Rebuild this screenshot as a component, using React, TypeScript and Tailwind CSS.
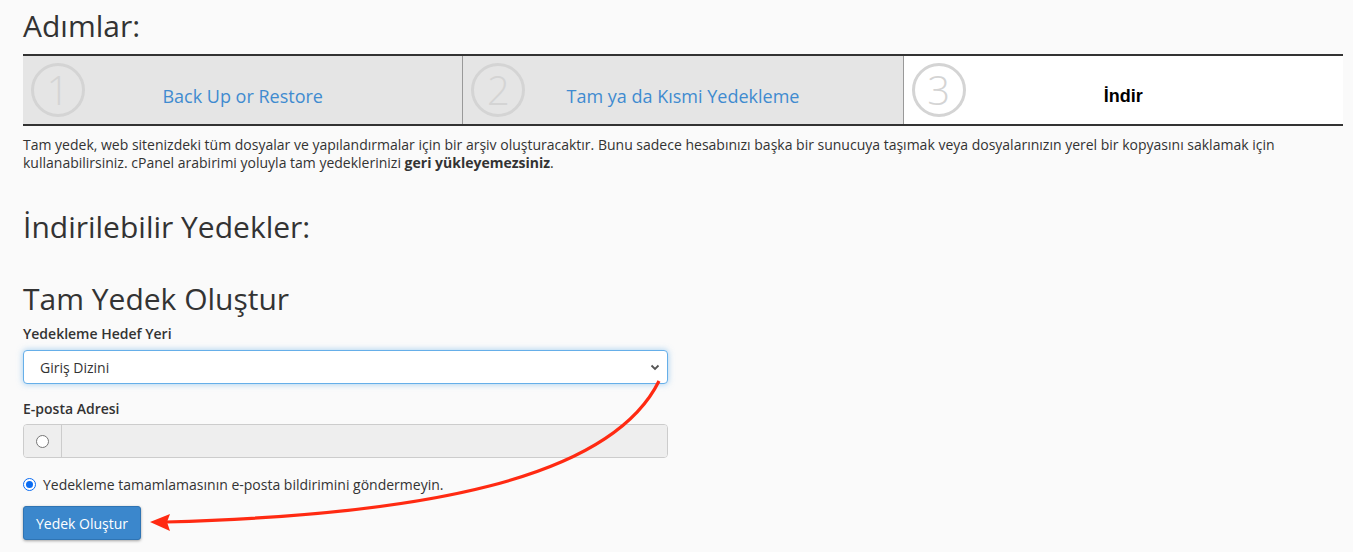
import React from "react";

const font = { fontFamily: '"Open Sans", "Noto Sans", Arial, sans-serif' };

function Step({ n, label, active }: { n: string; label: string; active?: boolean }) {
  return (
    <div className={`relative flex flex-1 items-center justify-center h-[68px] ${active ? "bg-white" : "bg-[#e5e5e5]"}`}>
      <div className="absolute left-[8px] top-[7px] w-[54px] h-[54px] rounded-full border-[3px] border-[#d4d4d4] flex items-center justify-center">
        <span className="text-[40px] leading-none text-[#d4d4d4] font-light">{n}</span>
      </div>
      {active ? (
        <span className="mt-[12px] text-[18px] font-bold text-black" style={{ fontFamily: '"Liberation Sans", Arial, sans-serif' }}>{label}</span>
      ) : (
        <span className="mt-[12px] text-[18px] text-[#3f8bd0]">{label}</span>
      )}
    </div>
  );
}

export default function App() {
  return (
    <div className="relative min-h-[552px] bg-[#fafafa] text-[#333] overflow-hidden" style={font}>
      <div className="px-[23px] pr-[10px]">
        <h1 className="text-[30px] leading-[36px] pt-[8px] h-[54px] font-normal">Adımlar:</h1>
        <div className="flex border-t-2 border-b-2 border-[#333]">
          <Step n="1" label="Back Up or Restore" />
          <div className="w-px bg-[#999]" />
          <Step n="2" label="Tam ya da Kısmi Yedekleme" />
          <div className="w-px bg-[#999]" />
          <Step n="3" label="İndir" active />
        </div>
        <p className="text-[14px] leading-[18px] mt-[10px] pr-[40px]">
          Tam yedek, web sitenizdeki tüm dosyalar ve yapılandırmalar için bir arşiv oluşturacaktır. Bunu sadece hesabınızı başka bir sunucuya taşımak veya dosyalarınızın yerel bir kopyasını saklamak için kullanabilirsiniz. cPanel arabirimi yoluyla tam yedeklerinizi <b>geri yükleyemezsiniz</b>.
        </p>
        <h2 className="text-[30px] leading-[34px] mt-[38px]">İndirilebilir Yedekler:</h2>
        <h2 className="text-[30px] leading-[34px] mt-[38px]">Tam Yedek Oluştur</h2>
        <div className="w-[645px]">
          <label className="block text-[14px] font-semibold mt-[9px] leading-[18px]">Yedekleme Hedef Yeri</label>
          <div className="mt-[7px] h-[34px] rounded-[4px] border border-[#66afe9] bg-white shadow-[0_0_6px_rgba(102,175,233,0.6)] flex items-center justify-between pl-[16px] pr-[6px]">
            <span className="text-[14px]">Giriş Dizini</span>
            <svg width="12" height="12" viewBox="0 0 12 12"><path d="M2.5 4.5 L6 8 L9.5 4.5" fill="none" stroke="#555" strokeWidth="1.8" /></svg>
          </div>
          <label className="block text-[14px] font-semibold mt-[16px] leading-[18px]">E-posta Adresi</label>
          <div className="mt-[6px] h-[34px] flex rounded-[4px] border border-[#ccc] overflow-hidden">
            <div className="w-[38px] bg-[#eee] border-r border-[#ccc] flex items-center justify-center">
              <span className="w-[13px] h-[13px] rounded-full border border-[#767676] bg-white" />
            </div>
            <div className="flex-1 bg-[#eee]" />
          </div>
          <div className="flex items-center mt-[17px] h-[18px]">
            <span className="w-[13px] h-[13px] rounded-full border-[1.5px] border-[#0b6cf2] bg-white mr-[7px] flex items-center justify-center">
              <span className="w-[7px] h-[7px] rounded-full bg-[#0b6cf2]" />
            </span>
            <span className="text-[14px]">Yedekleme tamamlamasının e-posta bildirimini göndermeyin.</span>
          </div>
          <button className="mt-[13px] h-[34px] px-[12px] rounded-[3px] bg-[#3b87cc] border border-[#2f74b3] text-white text-[14px] shadow-[0_1px_3px_rgba(0,0,0,0.35)]">Yedek Oluştur</button>
        </div>
      </div>
      <svg className="absolute left-0 top-0 pointer-events-none" width="1353" height="552" viewBox="0 0 1353 552">
        <path d="M659 381 C 610 480, 420 515, 166 522" fill="none" stroke="#ff2a12" strokeWidth="3.2" />
        <path d="M150 522 L170 514 L167 522 L170 531 Z" fill="#ff2a12" />
      </svg>
    </div>
  );
}
